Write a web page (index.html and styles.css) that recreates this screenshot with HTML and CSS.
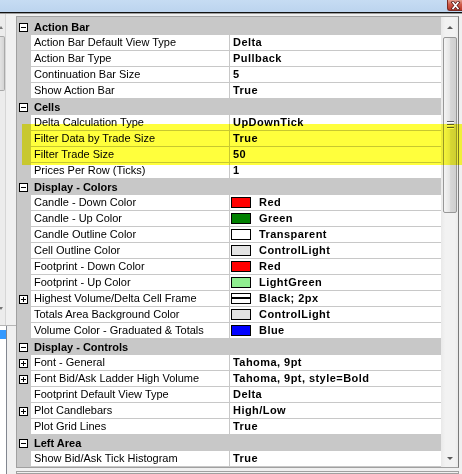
FILE: index.html
```html
<!DOCTYPE html>
<html>
<head>
<meta charset="utf-8">
<link rel="stylesheet" href="styles.css">
</head>
<body>
<div class="titlebar">
  <div class="close">
    <svg width="13" height="9" viewBox="0 0 13 9"><path d="M4 1.5 L9 7.5 M9 1.5 L4 7.5" stroke="#5a1a14" stroke-width="3.2" stroke-linecap="square"/><path d="M4 1.5 L9 7.5 M9 1.5 L4 7.5" stroke="#fff" stroke-width="1.6" stroke-linecap="square"/></svg>
  </div>
</div>
<div class="main">
  <div class="side">
    <div class="side-top">
      <div class="sbar">
        <div class="sarrow sup"></div>
        <div class="sthumb"></div>
        <div class="sarrow sdown"></div>
      </div>
    </div>
    <div class="side-bottom">
      <div class="slist"><div class="ssel"></div></div>
    </div>
  </div>
  <div class="gridwrap">
    <div class="grid">
      <div class="rows">
        <div class="row cat"><div class="m"><svg class="tg" width="9" height="9" viewBox="0 0 9 9"><rect x="0.5" y="0.5" width="8" height="8" fill="#fff" stroke="#000"/><path d="M2 4.5H7" stroke="#000"/></svg></div><div class="ct">Action Bar</div></div>
        <div class="row"><div class="m"></div><div class="lbl">Action Bar Default View Type</div><div class="val">Delta</div></div>
        <div class="row"><div class="m"></div><div class="lbl">Action Bar Type</div><div class="val">Pullback</div></div>
        <div class="row"><div class="m"></div><div class="lbl">Continuation Bar Size</div><div class="val">5</div></div>
        <div class="row"><div class="m"></div><div class="lbl">Show Action Bar</div><div class="val">True</div></div>

        <div class="row cat"><div class="m"><svg class="tg" width="9" height="9" viewBox="0 0 9 9"><rect x="0.5" y="0.5" width="8" height="8" fill="#fff" stroke="#000"/><path d="M2 4.5H7" stroke="#000"/></svg></div><div class="ct">Cells</div></div>
        <div class="row"><div class="m"></div><div class="lbl">Delta Calculation Type</div><div class="val">UpDownTick</div></div>
        <div class="row"><div class="m"></div><div class="lbl">Filter Data by Trade Size</div><div class="val">True</div></div>
        <div class="row"><div class="m"></div><div class="lbl">Filter Trade Size</div><div class="val">50</div></div>
        <div class="row"><div class="m"></div><div class="lbl">Prices Per Row (Ticks)</div><div class="val">1</div></div>

        <div class="row cat"><div class="m"><svg class="tg" width="9" height="9" viewBox="0 0 9 9"><rect x="0.5" y="0.5" width="8" height="8" fill="#fff" stroke="#000"/><path d="M2 4.5H7" stroke="#000"/></svg></div><div class="ct">Display - Colors</div></div>
        <div class="row"><div class="m"></div><div class="lbl">Candle - Down Color</div><div class="val sw"><span class="swatch red"></span>Red</div></div>
        <div class="row"><div class="m"></div><div class="lbl">Candle - Up Color</div><div class="val sw"><span class="swatch green"></span>Green</div></div>
        <div class="row"><div class="m"></div><div class="lbl">Candle Outline Color</div><div class="val sw"><span class="swatch white"></span>Transparent</div></div>
        <div class="row"><div class="m"></div><div class="lbl">Cell Outline Color</div><div class="val sw"><span class="swatch light"></span>ControlLight</div></div>
        <div class="row"><div class="m"></div><div class="lbl">Footprint - Down Color</div><div class="val sw"><span class="swatch red"></span>Red</div></div>
        <div class="row"><div class="m"></div><div class="lbl">Footprint - Up Color</div><div class="val sw"><span class="swatch lgreen"></span>LightGreen</div></div>
        <div class="row"><div class="m"><svg class="tg" width="9" height="9" viewBox="0 0 9 9"><rect x="0.5" y="0.5" width="8" height="8" fill="#fff" stroke="#000"/><path d="M2 4.5H7M4.5 2V7" stroke="#000"/></svg></div><div class="lbl">Highest Volume/Delta Cell Frame</div><div class="val sw"><span class="swatch white frame"></span>Black; 2px</div></div>
        <div class="row"><div class="m"></div><div class="lbl">Totals Area Background Color</div><div class="val sw"><span class="swatch light"></span>ControlLight</div></div>
        <div class="row"><div class="m"></div><div class="lbl">Volume Color - Graduated &amp; Totals</div><div class="val sw"><span class="swatch blue"></span>Blue</div></div>

        <div class="row cat"><div class="m"><svg class="tg" width="9" height="9" viewBox="0 0 9 9"><rect x="0.5" y="0.5" width="8" height="8" fill="#fff" stroke="#000"/><path d="M2 4.5H7" stroke="#000"/></svg></div><div class="ct">Display - Controls</div></div>
        <div class="row"><div class="m"><svg class="tg" width="9" height="9" viewBox="0 0 9 9"><rect x="0.5" y="0.5" width="8" height="8" fill="#fff" stroke="#000"/><path d="M2 4.5H7M4.5 2V7" stroke="#000"/></svg></div><div class="lbl">Font - General</div><div class="val">Tahoma, 9pt</div></div>
        <div class="row"><div class="m"><svg class="tg" width="9" height="9" viewBox="0 0 9 9"><rect x="0.5" y="0.5" width="8" height="8" fill="#fff" stroke="#000"/><path d="M2 4.5H7M4.5 2V7" stroke="#000"/></svg></div><div class="lbl">Font Bid/Ask Ladder High Volume</div><div class="val">Tahoma, 9pt, style=Bold</div></div>
        <div class="row"><div class="m"></div><div class="lbl">Footprint Default View Type</div><div class="val">Delta</div></div>
        <div class="row"><div class="m"><svg class="tg" width="9" height="9" viewBox="0 0 9 9"><rect x="0.5" y="0.5" width="8" height="8" fill="#fff" stroke="#000"/><path d="M2 4.5H7M4.5 2V7" stroke="#000"/></svg></div><div class="lbl">Plot Candlebars</div><div class="val">High/Low</div></div>
        <div class="row"><div class="m"></div><div class="lbl">Plot Grid Lines</div><div class="val">True</div></div>

        <div class="row cat"><div class="m"><svg class="tg" width="9" height="9" viewBox="0 0 9 9"><rect x="0.5" y="0.5" width="8" height="8" fill="#fff" stroke="#000"/><path d="M2 4.5H7" stroke="#000"/></svg></div><div class="ct">Left Area</div></div>
        <div class="row"><div class="m"></div><div class="lbl">Show Bid/Ask Tick Histogram</div><div class="val">True</div></div>
      </div>
      <div class="vscroll">
        <div class="vbtn"><span class="tri up"></span></div>
        <div class="track">
          <div class="thumb"><div class="grip"><i></i><i></i><i></i></div></div>
        </div>
        <div class="vbtn down"><span class="tri dn"></span></div>
      </div>
    </div>
    <div class="desc"></div>
  </div>
</div>
<div class="highlight"></div>
</body>
</html>
```

FILE: styles.css
```css
* { box-sizing: border-box; margin: 0; padding: 0; }
html, body { width: 462px; height: 474px; overflow: hidden; }
body {
  background: #f0f0f0;
  font-family: "Liberation Sans", Arial, sans-serif;
  font-size: 11px;
  color: #000;
  position: relative;
}

.titlebar {
  height: 13px;
  background: linear-gradient(#c6dcf3, #bcd4ee);
  border-bottom: 1px solid #111;
  display: flex;
  justify-content: flex-end;
}
.close {
  width: 15px;
  height: 11px;
  background: linear-gradient(#e6a191, #cf5a48 45%, #b8392a);
  border: 1px solid #7d2a20;
  border-top: none;
  border-right: none;
  border-radius: 0 0 0 3px;
  display: flex;
  align-items: center;
  justify-content: center;
}

.main {
  height: 461px;
  border-top: 1px solid #9c9c9c;
  display: flex;
}

/* left, partially visible panel */
.side {
  width: 16px;
  display: flex;
  flex-direction: column;
}
.side-top {
  height: 311px;
  display: flex;
}
.sbar {
  width: 6px;
  border-right: 1px solid #d6d6d6;
  background: #ececec;
  display: flex;
  flex-direction: column;
  align-items: flex-start;
}
.sarrow {
  width: 0;
  height: 0;
  border-left: 2px solid transparent;
  border-right: 2px solid transparent;
}
.sup { margin-top: 12px; border-bottom: 3px solid #777; margin-left: -1px; }
.sdown { margin-top: auto; margin-bottom: 15px; border-top: 3px solid #777; margin-left: -1px; }
.sthumb {
  margin-top: 7px;
  width: 5px;
  height: 55px;
  border: 1px solid #a9a9a9;
  border-left: none;
  border-radius: 0 2px 2px 0;
  background: linear-gradient(90deg, #e2e2e2, #d4d4d4);
}
.side-bottom {
  flex: 1;
  border-top: 1px solid #b5b5b5;
  display: flex;
}
.slist {
  width: 7px;
  background: #fff;
  border-right: 1px solid #828790;
  padding-top: 4px;
}
.ssel {
  height: 9px;
  background: #3399ff;
}

/* property grid */
.gridwrap {
  flex: 1;
  padding-top: 2px;
  display: flex;
  flex-direction: column;
}
.grid {
  width: 443px;
  height: 452px;
  border: 1px solid #a0a0a0;
  border-right-color: #7a7a7a;
  display: flex;
  background: #fff;
}
.rows {
  width: 424px;
  border-top: 2px solid #c8c8c8;
  display: flex;
  flex-direction: column;
}
.row {
  height: 16px;
  display: flex;
  flex: none;
}
.m {
  width: 14px;
  background: #c8c8c8;
  display: flex;
  align-items: center;
  padding-left: 2px;
  flex: none;
}
.tg { display: block; }
.lbl {
  width: 199px;
  border-right: 1px solid #c8c8c8;
  border-bottom: 1px solid #c8c8c8;
  padding-left: 3px;
  line-height: 15px;
  white-space: nowrap;
  overflow: hidden;
  flex: none;
}
.val {
  flex: 1;
  border-bottom: 1px solid #c8c8c8;
  padding-left: 3px;
  line-height: 15px;
  font-weight: bold;
  letter-spacing: 0.45px;
  white-space: nowrap;
  display: flex;
  align-items: center;
}
.val.sw { padding-left: 1px; }
.cat { background: #c8c8c8; }
.ct {
  flex: 1;
  padding-left: 3px;
  line-height: 16px;
  font-weight: bold;
}

.swatch {
  width: 20px;
  height: 11px;
  border: 1px solid #000;
  margin-right: 8px;
  flex: none;
  position: relative;
}
.red { background: #ff0000; }
.green { background: #008000; }
.white { background: #fff; }
.light { background: #e3e3e3; }
.lgreen { background: #90ee90; }
.blue { background: #0000ff; }
.frame::after {
  content: "";
  position: absolute;
  left: 0;
  right: 0;
  top: 3px;
  height: 2px;
  background: #000;
}

/* vertical scrollbar */
.vscroll {
  width: 17px;
  background: linear-gradient(90deg, #e9e9e9, #f2f2f2 25%, #f2f2f2 80%, #ebebeb);
  display: flex;
  flex-direction: column;
}
.vbtn {
  height: 20px;
  display: flex;
  justify-content: center;
  align-items: center;
  flex: none;
}
.vbtn.down { height: 15px; align-items: flex-start; padding-top: 5px; }
.tri {
  width: 0;
  height: 0;
  border-left: 3px solid transparent;
  border-right: 3px solid transparent;
  margin-left: 1px;
}
.tri.up { border-bottom: 3px solid #5a5a5a; }
.tri.dn { border-top: 3px solid #5a5a5a; }
.track { flex: 1; padding-left: 2px; padding-right: 1px; }
.thumb {
  height: 176px;
  border: 1px solid #979797;
  border-radius: 2px;
  background: linear-gradient(90deg, #f4f4f4, #e6e6e6 45%, #d6d6d6 55%, #cfcfcf);
  display: flex;
  align-items: center;
  justify-content: center;
}
.grip { display: flex; flex-direction: column; gap: 1px; }
.grip i {
  display: block;
  width: 7px;
  height: 2px;
  border-top: 1px solid #5e5e5e;
  border-bottom: 1px solid #fdfdfd;
}

.desc {
  margin-top: 3px;
  width: 443px;
  flex: 1;
  border: 1px solid #a0a0a0;
  background: #f0f0f0;
}

/* yellow highlighter annotation over the grid */
.highlight {
  position: absolute;
  left: 22px;
  top: 124px;
  width: 440px;
  height: 41px;
  background: #ffff3c;
  mix-blend-mode: multiply;
}
```
